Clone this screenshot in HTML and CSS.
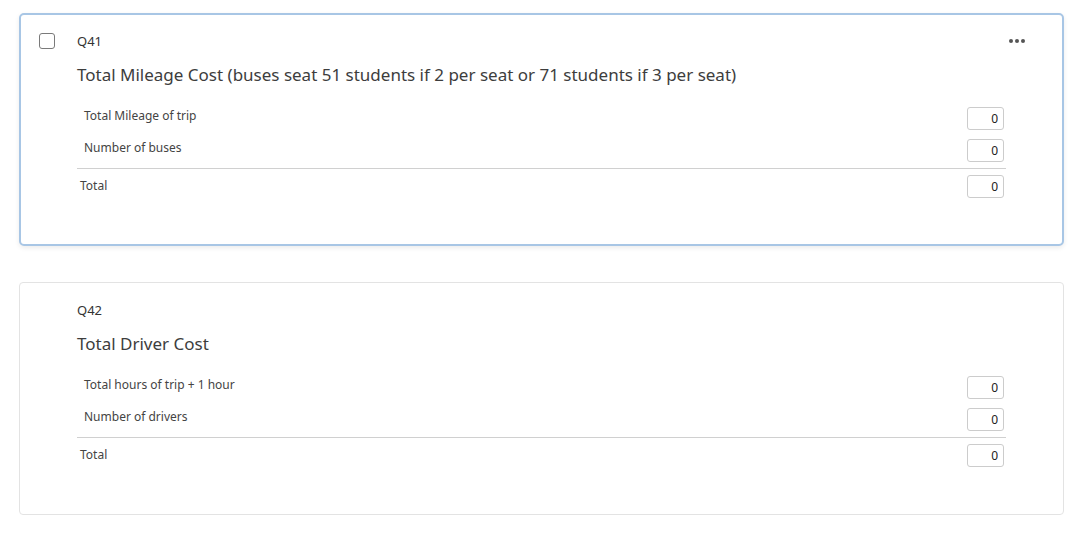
FILE: index.html
```html
<!DOCTYPE html>
<html>
<head>
<meta charset="utf-8">
<link rel="stylesheet" href="styles.css">
</head>
<body>
<div class="page">
  <div class="card card-active">
    <div class="check"></div>
    <div class="menu"><span></span><span></span><span></span></div>
    <div class="content">
      <div class="qid">Q41</div>
      <div class="title">Total Mileage Cost (buses seat 51 students if 2 per seat or 71 students if 3 per seat)</div>
      <div class="table">
        <div class="row"><span class="label">Total Mileage of trip</span><input class="num" value="0"></div>
        <div class="row"><span class="label">Number of buses</span><input class="num" value="0"></div>
        <div class="row total"><span class="label">Total</span><input class="num" value="0"></div>
      </div>
    </div>
  </div>
  <div class="card">
    <div class="content">
      <div class="qid">Q42</div>
      <div class="title">Total Driver Cost</div>
      <div class="table">
        <div class="row"><span class="label">Total hours of trip + 1 hour</span><input class="num" value="0"></div>
        <div class="row"><span class="label">Number of drivers</span><input class="num" value="0"></div>
        <div class="row total"><span class="label">Total</span><input class="num" value="0"></div>
      </div>
    </div>
  </div>
</div>
</body>
</html>
```
FILE: styles.css
```css
* { box-sizing: border-box; }
html, body { margin: 0; padding: 0; background: #fff; }
body { font-family: "Noto Sans", "Open Sans", sans-serif; color: #333; }
.page { padding: 13px 15px 0 19px; display: flex; flex-direction: column; gap: 36px; }
.card {
  position: relative;
  height: 233px;
  border: 1px solid #e3e3e3;
  border-radius: 4px;
  background: #fff;
  padding: 18px 57px 0 57px;
}
.card-active {
  border: 2px solid #a8c6e5;
  border-radius: 5px;
  padding: 17px 56px 0 56px;
  box-shadow: 0 2px 5px rgba(0,0,0,0.08);
}
.check {
  position: absolute;
  left: 18px; top: 18px;
  width: 16px; height: 16px;
  border: 1px solid #7a7a7a;
  border-radius: 3px;
}
.menu {
  position: absolute;
  right: 37px; top: 24px;
  display: flex; gap: 2px;
}
.menu span { width: 4px; height: 4px; border-radius: 50%; background: #555; }
.content { display: flex; flex-direction: column; }
.qid { font-size: 13px; line-height: 18px; color: #333; }
.title { margin-top: 13px; font-size: 17px; line-height: 24px; color: #3d3d3d; }
.table { margin-top: 15px; display: flex; flex-direction: column; width: 929px; }
.row {
  display: flex; align-items: flex-start; justify-content: space-between;
  height: 32px; padding: 0 2px 0 7px;
}
.row .label { margin-top: 5px; line-height: 18px; }
.row .num { margin-top: 5px; }
.row.total { margin-top: 2px; border-top: 1px solid #d0d0d0; height: 33px; padding-left: 3px; }
.row.total .label { margin-top: 8px; }
.row.total .num { margin-top: 6px; }
.label { font-size: 12px; color: #444; }
.num {
  width: 37px; height: 23px;
  border: 1px solid #cccccc; border-radius: 3px;
  font-family: "Noto Sans", sans-serif; font-size: 12px; color: #222;
  text-align: right; padding: 0 5px 0 0;
  background: #fff;
}
```
